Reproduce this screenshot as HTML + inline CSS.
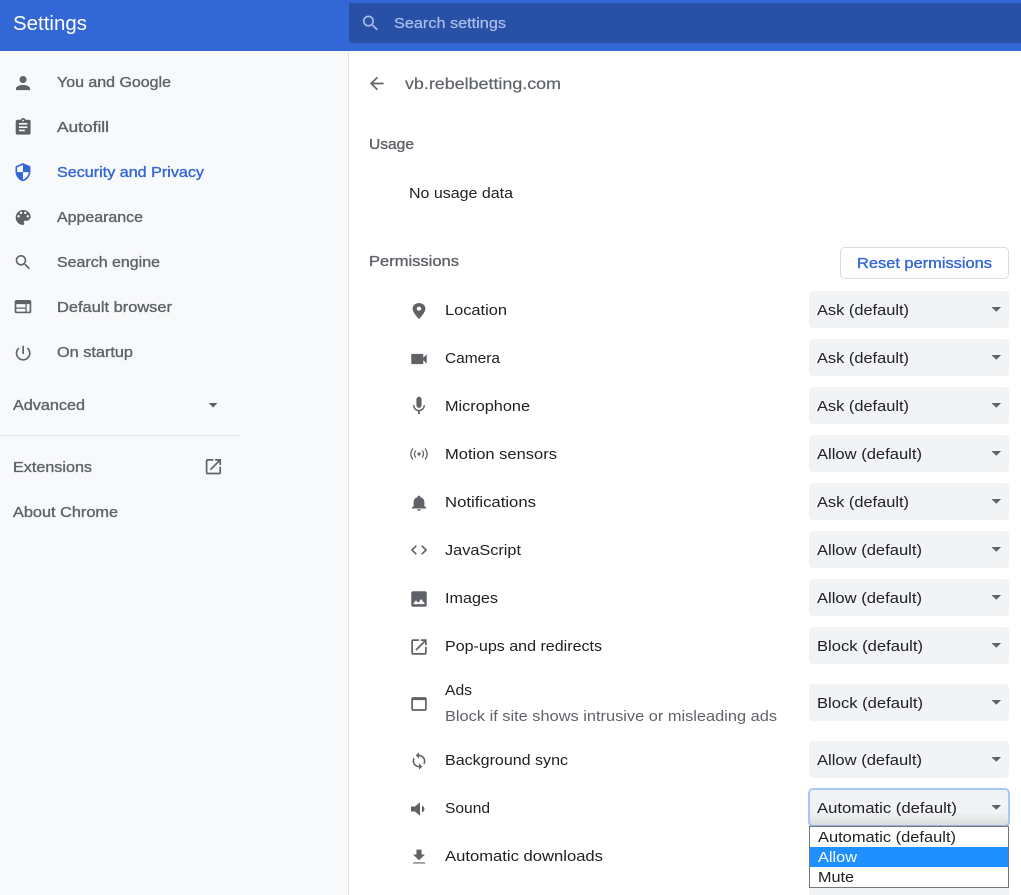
<!DOCTYPE html>
<html><head><meta charset="utf-8"><title>Settings</title>
<style>
html,body{margin:0;padding:0;width:1021px;height:895px;overflow:hidden;background:#fff}
svg{display:block}
text{font-family:"Liberation Sans",Arial,sans-serif;font-size:14.3px}
.s{fill:#5f6368;stroke:#5f6368;stroke-width:.35px}
.b{fill:#3367d6;stroke:#3367d6;stroke-width:.35px}
.r{fill:#202124}
.g{fill:#5f6368}
.i{fill:#5f6368}
.sel{fill:#f1f3f4}
.arr{fill:#5f6368}
</style></head><body>
<svg width="1021" height="895" viewBox="0 0 1021 895" xmlns="http://www.w3.org/2000/svg">
<defs>
<linearGradient id="sh" x1="0" y1="0" x2="0" y2="1"><stop offset="0" stop-color="#000" stop-opacity="0"/><stop offset="1" stop-color="#000" stop-opacity=".1"/></linearGradient>
</defs>
<!-- sidebar -->
<rect x="0" y="51" width="348" height="844" fill="#f8f9fa"/>
<rect x="348" y="51" width="1" height="844" fill="#dfe1e5"/>
<!-- header -->
<rect x="0" y="0" width="1021" height="51" fill="#3367d6"/>
<rect x="349" y="3" width="680" height="40" rx="2" fill="#2850a7"/>
<text x="13" y="30" textLength="74" lengthAdjust="spacingAndGlyphs" style="font-size:20px" fill="#fff">Settings</text>
<g transform="translate(360.400,13) scale(.85)" fill="#a9bde6"><path d="M15.5 14h-.79l-.28-.27C15.41 12.59 16 11.11 16 9.5 16 5.91 13.09 3 9.5 3S3 5.91 3 9.5 5.91 16 9.5 16c1.61 0 3.09-.59 4.23-1.57l.27.28v.79l5 4.99L20.49 19l-4.99-5zm-6 0C7.01 14 5 11.99 5 9.5S7.01 5 9.5 5 14 7.01 14 9.5 11.99 14 9.500 14z"/></g>
<text x="394" y="28" textLength="112" lengthAdjust="spacingAndGlyphs" style="font-size:14.6px;stroke:#a9bde6;stroke-width:.25px" fill="#a9bde6">Search settings</text>

<!-- sidebar icons -->
<g transform="translate(12.500,72.500) scale(.88)" class="i"><path d="M12 12c2.21 0 4-1.79 4-4s-1.79-4-4-4-4 1.79-4 4 1.79 4 4 4zm0 2c-2.67 0-8 1.34-8 4v2h16v-2c0-2.66-5.33-4-8-4z"/></g>
<g transform="translate(13.200,117.200) scale(.83)" class="i"><path d="M19 3h-4.18C14.4 1.84 13.3 1 12 1c-1.3 0-2.4.84-2.82 2H5c-1.1 0-2 .9-2 2v14c0 1.1.9 2 2 2h14c1.1 0 2-.9 2-2V5c0-1.1-.9-2-2-2zm-7 0c.55 0 1 .45 1 1s-.45 1-1 1-1-.45-1-1 .45-1 1-1zm2 14H7v-2h7v2zm3-4H7v-2h10v2zm0-4H7V7h10v2z"/></g>
<g transform="translate(13,162.200) scale(.83)" fill="#3367d6"><path d="M12 1L3 5v6c0 5.55 3.84 10.74 9 12 5.16-1.26 9-6.45 9-12V5l-9-4zm0 10.99h7c-.53 4.12-3.28 7.79-7 8.94V12H5V6.3l7-3.11v8.8z"/></g>
<g transform="translate(13.200,207.500) scale(.83)" class="i"><path d="M12 3c-4.97 0-9 4.03-9 9s4.03 9 9 9c.83 0 1.5-.67 1.5-1.5 0-.39-.15-.74-.39-1.01-.23-.26-.38-.61-.38-.99 0-.83.67-1.5 1.5-1.5H16c2.76 0 5-2.24 5-5 0-4.42-4.03-8-9-8zm-5.5 9c-.83 0-1.5-.67-1.5-1.5S5.67 9 6.5 9 8 9.67 8 10.5 7.33 12 6.5 12zm3-4C8.67 8 8 7.33 8 6.5S8.67 5 9.5 5s1.5.67 1.5 1.5S10.33 8 9.5 8zm5 0c-.83 0-1.5-.67-1.5-1.5S13.67 5 14.5 5s1.5.67 1.5 1.5S15.33 8 14.5 8zm3 4c-.83 0-1.5-.67-1.5-1.5S16.67 9 17.5 9s1.5.67 1.5 1.5-.67 1.5-1.5 1.5z"/></g>
<g transform="translate(13.200,252.500) scale(.82)" class="i"><path d="M15.5 14h-.79l-.28-.27C15.41 12.59 16 11.11 16 9.5 16 5.91 13.09 3 9.5 3S3 5.91 3 9.5 5.91 16 9.5 16c1.61 0 3.09-.59 4.23-1.57l.27.28v.79l5 4.99L20.49 19l-4.99-5zm-6 0C7.01 14 5 11.99 5 9.5S7.01 5 9.5 5 14 7.01 14 9.5 11.99 14 9.5 14z"/></g>
<g transform="translate(13,296.700) scale(.83)" class="i"><path fill-rule="evenodd" d="M4 4h16c1.1 0 2 .9 2 2v12c0 1.1-.9 2-2 2H4c-1.1 0-2-.9-2-2V6c0-1.1.9-2 2-2zm0 5v4h11V9H4zm0 5.500V18h11v-3.500H4zM16.500 9v9H20V9h-3.500z"/></g>
<g transform="translate(13.200,343.200) scale(.83)" class="i"><path d="M13 3h-2v10h2V3zm4.830 2.170l-1.420 1.420C17.990 7.860 19 9.810 19 12c0 3.870-3.130 7-7 7s-7-3.130-7-7c0-2.190 1.010-4.140 2.580-5.420L6.170 5.170C4.230 6.820 3 9.260 3 12c0 4.970 4.030 9 9 9s9-4.030 9-9c0-2.740-1.230-5.180-3.170-6.830z"/></g>
<path class="arr" d="M208.700 403h8.800l-4.400 4.600z"/>
<rect x="0" y="435" width="239" height="1" fill="#e3e5e8"/>
<g transform="translate(203.200,456.500) scale(.85)" class="i"><path d="M19 19H5V5h7V3H5c-1.110 0-2 .9-2 2v14c0 1.100.89 2 2 2h14c1.100 0 2-.9 2-2v-7h-2v7zM14 3v2h3.590l-9.830 9.830 1.410 1.410L19 6.410V10h2V3h-7z"/></g>

<!-- sidebar text -->
<text class="s" x="57" y="87" textLength="114" lengthAdjust="spacingAndGlyphs">You and Google</text>
<text class="s" x="57" y="132" textLength="52" lengthAdjust="spacingAndGlyphs">Autofill</text>
<text class="b" x="57" y="177" textLength="147" lengthAdjust="spacingAndGlyphs">Security and Privacy</text>
<text class="s" x="57" y="222" textLength="86" lengthAdjust="spacingAndGlyphs">Appearance</text>
<text class="s" x="57" y="267" textLength="103" lengthAdjust="spacingAndGlyphs">Search engine</text>
<text class="s" x="57" y="312" textLength="115" lengthAdjust="spacingAndGlyphs">Default browser</text>
<text class="s" x="57" y="357" textLength="76" lengthAdjust="spacingAndGlyphs">On startup</text>
<text class="s" x="13" y="410" textLength="72" lengthAdjust="spacingAndGlyphs">Advanced</text>
<text class="s" x="13" y="472" textLength="79" lengthAdjust="spacingAndGlyphs">Extensions</text>
<text class="s" x="13" y="517" textLength="105" lengthAdjust="spacingAndGlyphs">About Chrome</text>

<!-- main heading -->
<g transform="translate(366.600,73.300) scale(.85)" class="i"><path d="M20 11H7.830l5.590-5.590L12 4l-8 8 8 8 1.410-1.410L7.830 13H20v-2z"/></g>
<text x="405" y="89" textLength="156" lengthAdjust="spacingAndGlyphs" style="font-size:16px;stroke:#5f6368;stroke-width:.2px" fill="#5f6368">vb.rebelbetting.com</text>
<text class="s" x="369" y="149" textLength="45" lengthAdjust="spacingAndGlyphs">Usage</text>
<text class="r" x="409" y="198" textLength="104" lengthAdjust="spacingAndGlyphs">No usage data</text>
<text class="s" x="369" y="266" textLength="90" lengthAdjust="spacingAndGlyphs">Permissions</text>

<rect x="840.500" y="247.500" width="168" height="31" rx="4" fill="#fff" stroke="#dadce0"/>
<text class="b" x="857" y="268" textLength="135" lengthAdjust="spacingAndGlyphs">Reset permissions</text>

<!-- selects -->
<rect class="sel" x="809" y="291" width="200" height="37" rx="4"/>
<rect class="sel" x="809" y="339" width="200" height="37" rx="4"/>
<rect class="sel" x="809" y="387" width="200" height="37" rx="4"/>
<rect class="sel" x="809" y="435" width="200" height="37" rx="4"/>
<rect class="sel" x="809" y="483" width="200" height="37" rx="4"/>
<rect class="sel" x="809" y="531" width="200" height="37" rx="4"/>
<rect class="sel" x="809" y="579" width="200" height="37" rx="4"/>
<rect class="sel" x="809" y="627" width="200" height="37" rx="4"/>
<rect class="sel" x="809" y="684" width="200" height="37" rx="4"/>
<rect class="sel" x="809" y="741" width="200" height="37" rx="4"/>
<rect class="sel" x="809" y="837" width="200" height="37" rx="4"/>
<rect class="sel" x="809" y="885" width="200" height="15" rx="4"/>
<path class="arr" d="M991.500 307h9.600l-4.800 4.800z"/>
<path class="arr" d="M991.500 355h9.600l-4.800 4.800z"/>
<path class="arr" d="M991.500 403h9.600l-4.800 4.800z"/>
<path class="arr" d="M991.500 451h9.600l-4.800 4.800z"/>
<path class="arr" d="M991.500 499h9.600l-4.800 4.800z"/>
<path class="arr" d="M991.500 547h9.600l-4.800 4.800z"/>
<path class="arr" d="M991.500 595h9.600l-4.800 4.800z"/>
<path class="arr" d="M991.500 643h9.600l-4.800 4.800z"/>
<path class="arr" d="M991.500 700h9.600l-4.800 4.800z"/>
<path class="arr" d="M991.500 757h9.600l-4.800 4.800z"/>
<text class="r" x="817" y="315" textLength="92" lengthAdjust="spacingAndGlyphs">Ask (default)</text>
<text class="r" x="817" y="363" textLength="92" lengthAdjust="spacingAndGlyphs">Ask (default)</text>
<text class="r" x="817" y="411" textLength="92" lengthAdjust="spacingAndGlyphs">Ask (default)</text>
<text class="r" x="817" y="459" textLength="105" lengthAdjust="spacingAndGlyphs">Allow (default)</text>
<text class="r" x="817" y="507" textLength="92" lengthAdjust="spacingAndGlyphs">Ask (default)</text>
<text class="r" x="817" y="555" textLength="105" lengthAdjust="spacingAndGlyphs">Allow (default)</text>
<text class="r" x="817" y="603" textLength="105" lengthAdjust="spacingAndGlyphs">Allow (default)</text>
<text class="r" x="817" y="651" textLength="106" lengthAdjust="spacingAndGlyphs">Block (default)</text>
<text class="r" x="817" y="708" textLength="106" lengthAdjust="spacingAndGlyphs">Block (default)</text>
<text class="r" x="817" y="765" textLength="105" lengthAdjust="spacingAndGlyphs">Allow (default)</text>

<!-- focused select -->
<rect x="809" y="789" width="200" height="37" rx="4" fill="#f1f3f4" stroke="#a8c7fa" stroke-width="2"/>
<rect x="810" y="812" width="198" height="14" fill="url(#sh)"/>
<path class="arr" d="M991.500 805h9.600l-4.800 4.800z"/>
<text class="r" x="817" y="813" textLength="140" lengthAdjust="spacingAndGlyphs">Automatic (default)</text>

<!-- dropdown -->
<rect x="809.500" y="826.500" width="199" height="61" fill="#fff" stroke="#767676"/>
<rect x="810" y="847" width="198" height="20" fill="#1e90ff"/>
<text class="r" x="818" y="842" textLength="138" lengthAdjust="spacingAndGlyphs">Automatic (default)</text>
<text x="818" y="862" textLength="39" lengthAdjust="spacingAndGlyphs" fill="#fff">Allow</text>
<text class="r" x="818" y="882" textLength="36" lengthAdjust="spacingAndGlyphs">Mute</text>

<!-- permission labels -->
<text class="r" x="445" y="315" textLength="62" lengthAdjust="spacingAndGlyphs">Location</text>
<text class="r" x="445" y="363" textLength="55" lengthAdjust="spacingAndGlyphs">Camera</text>
<text class="r" x="445" y="411" textLength="85" lengthAdjust="spacingAndGlyphs">Microphone</text>
<text class="r" x="445" y="459" textLength="112" lengthAdjust="spacingAndGlyphs">Motion sensors</text>
<text class="r" x="445" y="507" textLength="91" lengthAdjust="spacingAndGlyphs">Notifications</text>
<text class="r" x="445" y="555" textLength="76" lengthAdjust="spacingAndGlyphs">JavaScript</text>
<text class="r" x="445" y="603" textLength="53" lengthAdjust="spacingAndGlyphs">Images</text>
<text class="r" x="445" y="651" textLength="157" lengthAdjust="spacingAndGlyphs">Pop-ups and redirects</text>
<text class="r" x="445" y="695" textLength="27" lengthAdjust="spacingAndGlyphs">Ads</text>
<text class="g" x="445" y="721" textLength="332" lengthAdjust="spacingAndGlyphs">Block if site shows intrusive or misleading ads</text>
<text class="r" x="445" y="765" textLength="123" lengthAdjust="spacingAndGlyphs">Background sync</text>
<text class="r" x="445" y="813" textLength="45" lengthAdjust="spacingAndGlyphs">Sound</text>
<text class="r" x="445" y="861" textLength="158" lengthAdjust="spacingAndGlyphs">Automatic downloads</text>

<!-- permission icons -->
<g transform="translate(407,299)" class="i"><path d="M12 2C8.130 2 5 5.130 5 9c0 5.250 7 13 7 13s7-7.750 7-13c0-3.870-3.130-7-7-7zm0 9.500c-1.380 0-2.500-1.120-2.500-2.500s1.120-2.500 2.500-2.500 2.500 1.120 2.500 2.500-1.120 2.500-2.500 2.500z" transform="translate(12,12) scale(.92,.8) translate(-12,-12)"/></g>
<g transform="translate(407,347)" class="i"><path d="M17 10.500V7c0-.55-.45-1-1-1H4c-.55 0-1 .45-1 1v10c0 .55.45 1 1 1h12c.55 0 1-.45 1-1v-3.500l4 4v-11l-4 4z" transform="translate(12,12) scale(.86) translate(-12,-12)"/></g>
<g transform="translate(407,394)" class="i"><path d="M12 14c1.660 0 2.990-1.340 2.990-3L15 5c0-1.660-1.340-3-3-3S9 3.340 9 5v6c0 1.660 1.340 3 3 3zm5.300-3c0 3-2.540 5.100-5.300 5.100S6.700 14 6.700 11H5c0 3.410 2.720 6.230 6 6.720V21h2v-3.280c3.280-.48 6-3.300 6-6.720h-1.700z" transform="translate(12,12) scale(.86,.92) translate(-12,-12)"/></g>
<g transform="translate(411,447)"><circle cx="8" cy="7" r="1.600" fill="#5f6368"/><path d="M4.800 3.500c-1.800 2-1.800 5 0 7M11.200 3.500c1.800 2 1.800 5 0 7M2 1.500c-2.700 3.500-2.700 7.500 0 11M14 1.500c2.700 3.500 2.700 7.500 0 11" fill="none" stroke="#5f6368" stroke-width="1.300"/></g>
<g transform="translate(407,491)" class="i"><path d="M12 22c1.100 0 2-.9 2-2h-4c0 1.100.89 2 2 2zm6-6v-5c0-3.070-1.640-5.640-4.500-6.320V4c0-.83-.67-1.500-1.500-1.500s-1.500.67-1.500 1.500v.68C7.630 5.360 6 7.920 6 11v5l-2 2v1h16v-1l-2-2z" transform="translate(12,12) scale(.9,.78) translate(-12,-12)"/></g>
<g transform="translate(407,538)" class="i"><path d="M9.400 16.600L4.800 12l4.600-4.600L8 6l-6 6 6 6 1.400-1.400zm5.200 0l4.600-4.600-4.600-4.600L16 6l6 6-6 6-1.400-1.400z" transform="translate(12,12) scale(.82) translate(-12,-12)"/></g>
<g transform="translate(407,587)" class="i"><path d="M21 19V5c0-1.100-.9-2-2-2H5c-1.100 0-2 .9-2 2v14c0 1.100.9 2 2 2h14c1.100 0 2-.9 2-2zM8.500 13.500l2.500 3.010L14.500 12l4.500 6H5l3.500-4.500z" transform="translate(12,12) scale(.86) translate(-12,-12)"/></g>
<g transform="translate(407,635)" class="i"><path d="M19 19H5V5h7V3H5c-1.110 0-2 .9-2 2v14c0 1.100.89 2 2 2h14c1.100 0 2-.9 2-2v-7h-2v7zM14 3v2h3.590l-9.830 9.830 1.410 1.410L19 6.410V10h2V3h-7z" transform="translate(12,12) scale(.86) translate(-12,-12)"/></g>
<g transform="translate(407,692)" class="i"><path d="M19 4H5c-1.100 0-2 .9-2 2v12c0 1.100.9 2 2 2h14c1.100 0 2-.9 2-2V6c0-1.100-.9-2-2-2zm0 14H5V7.500h14V18z" transform="translate(12,12) scale(.86) translate(-12,-12)"/></g>
<g transform="translate(407,749)" class="i"><path d="M12 4V1L8 5l4 4V6c3.310 0 6 2.690 6 6 0 1.010-.25 1.970-.7 2.800l1.460 1.460C19.540 15.030 20 13.570 20 12c0-4.420-3.580-8-8-8zm0 14c-3.310 0-6-2.690-6-6 0-1.010.25-1.970.7-2.800L5.240 7.740C4.460 8.970 4 10.430 4 12c0 4.420 3.580 8 8 8v3l4-4-4-4v3z" transform="translate(12,12) scale(.8) translate(-12,-12)"/></g>
<g transform="translate(408,797)" class="i"><path d="M3 9v6h4l5 5V4L7 9H3zm13.500 3c0-1.770-1.020-3.290-2.500-4.030v8.050c1.480-.73 2.500-2.250 2.500-4.020z" transform="translate(12,12) scale(1,.85) translate(-12,-12)"/></g>
<g transform="translate(407,845)" class="i"><path d="M19 9h-4V3H9v6H5l7 7 7-7zM5 18.500v1.500h14v-1.500H5z" transform="translate(12,12) scale(.86,.82) translate(-12,-12)"/></g>
</svg>
</body></html>
